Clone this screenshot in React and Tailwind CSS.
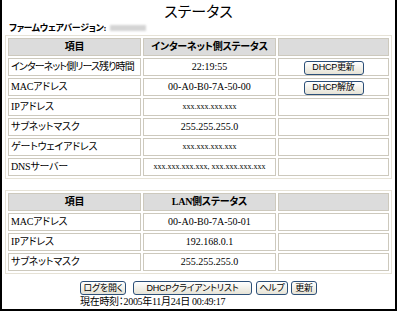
const font = "[font-family:'Liberation_Serif','Noto_Sans_CJK_JP',serif] [font-feature-settings:'palt']";
const btnFont = "[font-family:'Liberation_Sans','Noto_Sans_CJK_JP',sans-serif] [font-feature-settings:'palt']";

const Button = ({ children, className = '' }) => (
  <button
    className={`h-[14px] rounded-[3px] border border-[#2c4f78] bg-gradient-to-b from-white to-[#e6e3d6] p-0 text-[9px] leading-none tracking-[-0.2px] text-black ${btnFont} ${className}`}
  >
    {children}
  </button>
);

const cell = 'h-[18px] border border-[#cdc9bd] p-0 leading-[14px] whitespace-nowrap overflow-hidden';

const StatusTable = ({ title, rows }) => (
  <table className="mx-auto w-[387px] table-fixed border-separate border-spacing-[2px] border border-[#e6e2d6]">
    <colgroup>
      <col className="w-[133px]" />
      <col className="w-[133px]" />
      <col className="w-[111px]" />
    </colgroup>
    <thead>
      <tr>
        <th className={`${cell} bg-[#dcdcdc] text-center text-[10px] font-bold tracking-[-0.3px]`}>項目</th>
        <th className={`${cell} bg-[#dcdcdc] text-center text-[10px] font-bold tracking-[-0.3px]`}>{title}</th>
        <th className={`${cell} bg-[#dcdcdc]`}></th>
      </tr>
    </thead>
    <tbody>
      {rows.map((row, i) => (
        <tr key={i}>
          <td className={`${cell} px-[2px] text-[10px] ${row.tight ? 'tracking-[-0.9px]' : 'tracking-[-0.2px]'}`}>{row.label}</td>
          <td className={`${cell} text-center ${row.small ? 'text-[8px]' : 'text-[10px]'}`}>{row.value}</td>
          <td className={`${cell} text-center`}>
            {row.button && <Button className="w-[60px] align-middle">{row.button}</Button>}
          </td>
        </tr>
      ))}
    </tbody>
  </table>
);

const wanRows = [
  { label: 'インターネット側リース残り時間', value: '22:19:55', button: 'DHCP更新', tight: true },
  { label: 'MACアドレス', value: '00-A0-B0-7A-50-00', button: 'DHCP解放' },
  { label: 'IPアドレス', value: 'xxx.xxx.xxx.xxx', small: true },
  { label: 'サブネットマスク', value: '255.255.255.0' },
  { label: 'ゲートウェイアドレス', value: 'xxx.xxx.xxx.xxx', small: true },
  { label: 'DNSサーバー', value: 'xxx.xxx.xxx.xxx, xxx.xxx.xxx.xxx', small: true },
];

const lanRows = [
  { label: 'MACアドレス', value: '00-A0-B0-7A-50-01' },
  { label: 'IPアドレス', value: '192.168.0.1' },
  { label: 'サブネットマスク', value: '255.255.255.0' },
];

export default function App() {
  return (
    <div className={`h-[315px] w-[400px] overflow-hidden bg-white text-black ${font}`}>
      <div className="h-[311px] w-[397px] border-x-2 border-b-2 border-black">
        <h1 className="pt-[2px] text-center text-[15px] leading-[20px]">ステータス</h1>
        <div className="flex items-center pl-[7px] text-[9px] font-bold leading-[12px] tracking-[-0.3px]">
          ファームウェアバージョン:
          <span className="ml-[4px] inline-block h-[6px] w-[36px] bg-[#d4d4d4] blur-[1px]"></span>
        </div>

        <div className="mt-[1px]">
          <StatusTable title="インターネット側ステータス" rows={wanRows} />
        </div>
        <div className="mt-[11px]">
          <StatusTable title="LAN側ステータス" rows={lanRows} />
        </div>

        <div className="mt-[7px] flex justify-center">
          <div>
            <div className="flex items-center">
              <Button className="w-[46px]">ログを開く</Button>
              <Button className="ml-[7px] w-[119px]">DHCPクライアントリスト</Button>
              <Button className="ml-[4px] w-[32px]">ヘルプ</Button>
              <Button className="ml-[3px] w-[26px]">更新</Button>
            </div>
            <div className="mt-[1px] text-[10px] leading-[12px] tracking-[-0.3px]">現在時刻：2005年11月24日 00:49:17</div>
          </div>
        </div>
      </div>
    </div>
  );
}
